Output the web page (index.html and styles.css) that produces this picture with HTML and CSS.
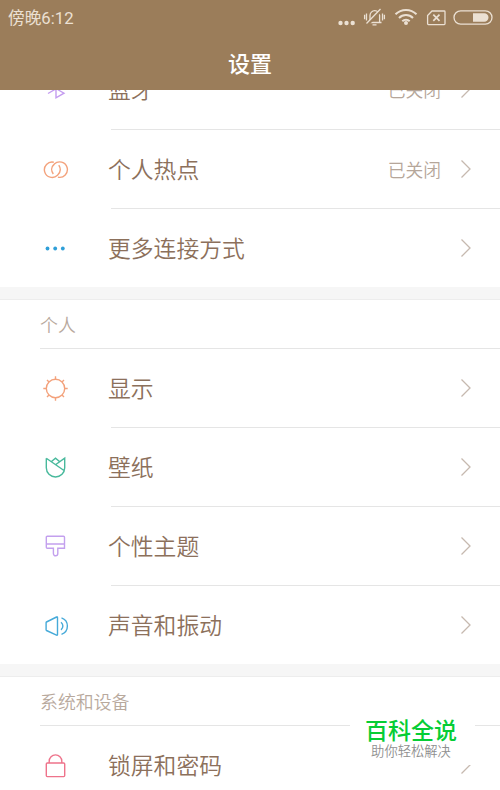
FILE: index.html
```
<!DOCTYPE html>
<html lang="zh-CN">
<head>
<meta charset="utf-8">
<title>设置</title>
<link rel="stylesheet" href="styles.css">
</head>
<body>
<header class="header">
  <div class="status">
    <span class="time">傍晚6:12</span>
    <svg class="status-icons" width="160" height="24" viewBox="0 0 160 24" fill="none" stroke="#ebe0d3" stroke-width="1.3">
      <g fill="#ebe0d3" stroke="none"><circle cx="0.5" cy="17" r="2.2"/><circle cx="6.5" cy="17" r="2.2"/><circle cx="12.7" cy="17" r="2.2"/></g>
      <path d="M28.500 16.500h13M30 16V9.500a4.800 4.800 0 0 1 9.600 0V16"/>
      <path d="M27.500 18.500L41.500 4" stroke="#9b7d5a" stroke-width="3"/>
      <path d="M26.500 17.500L40.500 3M32.500 18.800h4M26.500 7.500v7M24.600 8.700v4.500M42.500 7.500v7M44.400 8.700v4.500"/>
      <g stroke-width="2"><path d="M55.500 9.500a14.700 14.700 0 0 1 21 0M59 13.200a9.700 9.700 0 0 1 14 0M62.300 16.500a5.200 5.200 0 0 1 7.400 0" transform="translate(0 -1.200)"/></g>
      <circle cx="66" cy="17" r="2" fill="#ebe0d3" stroke="none"/>
      <path d="M92 5h12.200q.8 0 .8.800v12q0 .8-.8.800H88.400q-.8 0-.8-.8V9.500z"/>
      <path d="M93.300 8.700l6.200 6.200M99.500 8.700l-6.200 6.200" stroke-width="1.700"/>
      <rect x="114" y="4.800" width="38" height="13.400" rx="6.700"/>
      <path d="M133 7.300h11.300a4.200 4.200 0 0 1 0 8.400H133z" fill="#ebe0d3" stroke="none"/>
    </svg>
  </div>
  <h1 class="title">设置</h1>
</header>
<main class="list">
  <section class="group">
    <div class="row row-first">
      <svg class="icon" viewBox="0 0 28 28" stroke="#c49cf0"><path d="M7 9l16 9.200-8 4.700V4.500l8 4.700L7 18.500"/></svg>
      <span class="name">蓝牙</span><span class="value">已关闭</span>
      <svg class="arrow" viewBox="0 0 12 20"><path d="M1.500 1.500L10 10l-8.500 8.500"/></svg>
    </div>
    <div class="row">
      <svg class="icon" viewBox="0 0 28 28" stroke="#f3a27c"><path d="M12.800 7.200A7.700 7.700 0 1 0 16.500 20.200c3.200-3 3.200-7 1.300-10M12.300 19c-2.500-3.300-2-7.300 1-9.900a7.700 7.700 0 1 1 3.600 13"/></svg>
      <span class="name">个人热点</span><span class="value">已关闭</span>
      <svg class="arrow" viewBox="0 0 12 20"><path d="M1.500 1.500L10 10l-8.500 8.500"/></svg>
    </div>
    <div class="row">
      <svg class="icon" viewBox="0 0 28 28" fill="#2f9fd8"><circle cx="6.500" cy="14.500" r="1.900"/><circle cx="14.200" cy="14.500" r="1.900"/><circle cx="21.800" cy="14.500" r="1.900"/></svg>
      <span class="name">更多连接方式</span>
      <svg class="arrow" viewBox="0 0 12 20"><path d="M1.500 1.500L10 10l-8.500 8.500"/></svg>
    </div>
  </section>
  <section class="group">
    <h2 class="label">个人</h2>
    <div class="row">
      <svg class="icon" viewBox="0 0 28 28" stroke="#f3a27c"><circle cx="14.500" cy="14.500" r="9.200"/><path d="M14.500 5.300V2.300M14.500 23.700v3M5.300 14.500h-3M23.700 14.500h3M8 8L6 6M21 8l2-2M8 21l-2 2M21 21l2 2"/></svg>
      <span class="name">显示</span>
      <svg class="arrow" viewBox="0 0 12 20"><path d="M1.500 1.500L10 10l-8.500 8.500"/></svg>
    </div>
    <div class="row">
      <svg class="icon" viewBox="0 0 28 28" stroke="#48b99c"><path d="M5.300 5.200L23 17.500M5.300 5.200v9.600a9.200 9.200 0 0 0 18.400 0V5.200L14.800 11.500M10.500 8.500l4-3.400 4 3.400"/></svg>
      <span class="name">壁纸</span>
      <svg class="arrow" viewBox="0 0 12 20"><path d="M1.500 1.500L10 10l-8.500 8.500"/></svg>
    </div>
    <div class="row">
      <svg class="icon" viewBox="0 0 28 28" stroke="#c3a0ee"><path d="M6.300 4.300h16.200q1 0 1 1v11h-6.700v5.300a2.200 2.200 0 0 1-4.400 0v-5.300H6.300q-1 0-1-1v-10q0-1 1-1zM5.300 12h18.200"/></svg>
      <span class="name">个性主题</span>
      <svg class="arrow" viewBox="0 0 12 20"><path d="M1.500 1.500L10 10l-8.500 8.500"/></svg>
    </div>
    <div class="row">
      <svg class="icon" viewBox="0 0 28 28" stroke="#46aad9"><path d="M5.500 11l10-5q1-.4 1 .6v17q0 1-1 .6l-10-4.700q-.4-.2-.4-.7v-7q0-.6.400-.8zM20 11.300a4.800 4.800 0 0 1 0 7.600M20.500 6.800a8.800 8.800 0 0 1 0 16.600"/></svg>
      <span class="name">声音和振动</span>
      <svg class="arrow" viewBox="0 0 12 20"><path d="M1.500 1.500L10 10l-8.500 8.500"/></svg>
    </div>
  </section>
  <section class="group">
    <h2 class="label">系统和设备</h2>
    <div class="row">
      <svg class="icon" viewBox="0 0 28 28" stroke="#ee738b"><rect x="5.300" y="12" width="18.400" height="13.600" rx="1"/><path d="M8.200 12v-1.800a6.300 6.300 0 0 1 12.600 0V12"/></svg>
      <span class="name">锁屏和密码</span>
      <svg class="arrow" viewBox="0 0 12 20"><path d="M1.500 1.500L10 10l-8.500 8.500"/></svg>
    </div>
  </section>
</main>
<aside class="badge"><strong class="badge-title">百科全说</strong><span class="badge-sub">助你轻松解决</span></aside>
</body>
</html>
```
FILE: styles.css
```
* { box-sizing: border-box; }
body {
  margin: 0;
  height: 790px;
  overflow: hidden;
  position: relative;
  background: #fff;
  color: #8c705b;
  font-family: "Noto Sans CJK SC", sans-serif;
  font-weight: 350;
}
.header {
  position: relative;
  z-index: 1;
  height: 90px;
  background: #9b7d5a;
  color: #fff;
}
.status {
  height: 36px;
  padding: 6px 0 0 8px;
  display: flex;
  justify-content: space-between;
}
.time {
  padding-top: 1px;
  font: 400 16.700px/24px Roboto, "Noto Sans CJK SC", sans-serif;
  color: #ebe0d3;
}
.status-icons { overflow: visible; }
.title {
  margin: 0;
  padding-top: 10px;
  font-size: 22px;
  line-height: 32px;
  font-weight: 500;
  text-align: center;
}
.list { margin-top: -39px; }
.group + .group {
  border-top: 12px solid #f6f6f6;
  background: linear-gradient(#ededed, #ededed) 0 0 / 100% 1px no-repeat padding-box;
}
.label {
  margin: 0 0 0 40px;
  height: 50px;
  border-bottom: 1px solid #e5e5e5;
  font-size: 17.900px;
  line-height: 50px;
  font-weight: 350;
  color: #b8a99d;
}
.row {
  height: 79px;
  display: flex;
  align-items: center;
  padding: 0 29px 1px 41px;
  background: linear-gradient(#e5e5e5, #e5e5e5) 111px 100% / 100% 1px no-repeat;
}
.row:last-child { height: 78px; padding-bottom: 0; background: none; }
.row-first { padding-bottom: 3px; }
.icon {
  width: 28px;
  height: 28px;
  fill: none;
  stroke-width: 1.400;
}
.icon[fill] { fill: #2f9fd8; }
.name {
  margin-left: 39px;
  flex: 1;
  font-size: 22.800px;
  line-height: 34px;
}
.value {
  margin-right: 19px;
  font-size: 17.800px;
  color: #b5a69a;
}
.arrow {
  width: 12px;
  height: 20px;
  margin-right: -1px;
  fill: none;
  stroke: #c6b9af;
  stroke-width: 1.300;
}
.badge {
  position: absolute;
  left: 350px;
  top: 705px;
  width: 125px;
  height: 60px;
  padding-top: 9px;
  background: #fff;
  text-align: center;
}
.badge-title, .badge-sub { display: block; margin-left: -3px; }
.badge-title {
  font-size: 23px;
  line-height: 30px;
  font-weight: 500;
  color: #06cd35;
}
.badge-sub {
  font-size: 13.300px;
  line-height: 14px;
  color: #8f8f8f;
}
```
